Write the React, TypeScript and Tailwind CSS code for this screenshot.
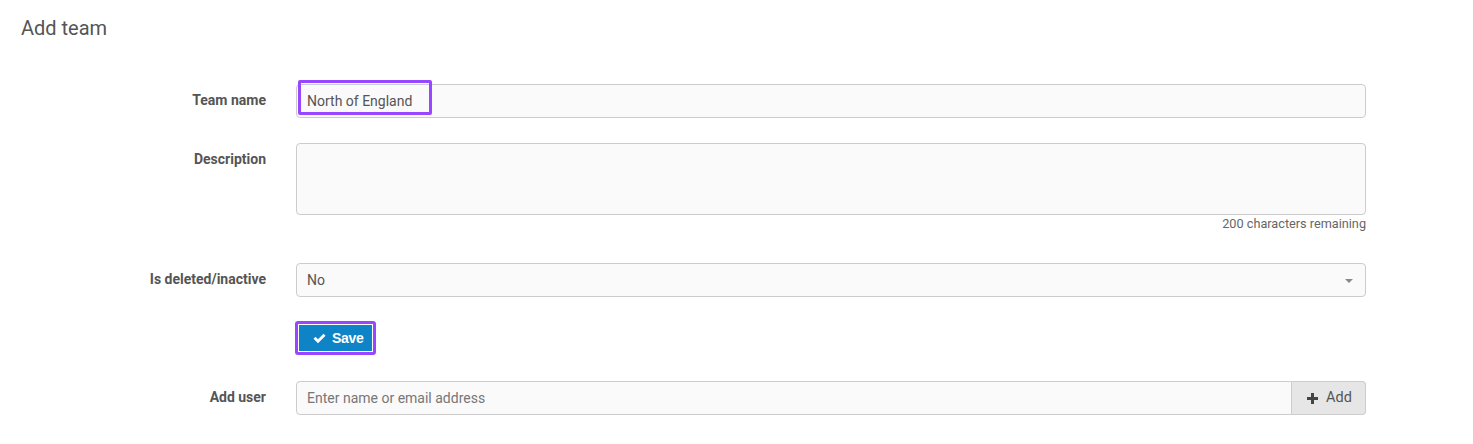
import React from 'react';

const font = { fontFamily: 'Roboto, "Liberation Sans", Arial, sans-serif' };

const Row: React.FC<{ label: string; className?: string; children: React.ReactNode }> = ({ label, className = '', children }) => (
  <div className={`flex ${className}`}>
    <label className="w-[266px] shrink-0 pt-[8px] text-right text-[14px] font-bold text-[#555] leading-[17px]">{label}</label>
    <div className="ml-[30px] w-[1070px]">{children}</div>
  </div>
);

export default function App() {
  return (
    <div className="min-h-screen bg-white text-[#555]" style={font}>
      <h1 className="pl-[21px] pt-[16px] text-[20px] leading-[24px] font-normal text-[#555]">Add team</h1>

      <div className="mt-[44px]">
        <Row label="Team name">
          <div className="relative">
            <input
              className="h-[34px] w-full rounded-[4px] border border-[#ccc] bg-[#fafafa] px-[10px] text-[14px] text-[#555] outline-none"
              defaultValue="North of England"
            />
            <div className="pointer-events-none absolute left-[2px] top-[-4px] h-[35px] w-[134px] rounded-[2px] border-[3px] border-[#9747ff]" />
          </div>
        </Row>

        <Row label="Description" className="mt-[25px]">
          <textarea className="block h-[72px] w-full resize-none rounded-[4px] border border-[#ccc] bg-[#fafafa] px-[10px] py-[6px] text-[14px] outline-none" />
          <div className="mt-[2px] text-right text-[12.7px] leading-[14px] text-[#666]">200 characters remaining</div>
        </Row>

        <Row label="Is deleted/inactive" className="mt-[32px]">
          <div className="relative flex h-[34px] w-full items-center rounded-[4px] border border-[#ccc] bg-[#fafafa] px-[10px] text-[14px] text-[#555]">
            No
            <span className="absolute right-[12px] top-[15px] h-0 w-0 border-x-[4px] border-t-[4px] border-x-transparent border-t-[#888]" />
          </div>
        </Row>

        <div className="mt-[24px] pl-[295px]">
          <div className="inline-flex rounded-[3px] border-[3px] border-[#9747ff] p-[1px]">
            <button
              className="flex h-[26px] items-center gap-[6px] bg-[#0e84c7] pl-[14px] pr-[8px] text-[14px] font-bold text-white"
              style={{ fontFamily: '"Liberation Sans", Arial, sans-serif' }}
            >
              <svg width="13" height="11" viewBox="0 0 13 11" fill="white">
                <path d="M0.5 5.8 L2.5 3.8 L5 6.3 L10.5 0.8 L12.5 2.8 L5 10.3 Z" />
              </svg>
              <span className="tracking-[-0.3px]">Save</span>
            </button>
          </div>
        </div>

        <Row label="Add user" className="mt-[26px]">
          <div className="flex h-[34px] w-full">
            <input
              className="h-full flex-1 rounded-l-[4px] border border-[#ccc] bg-[#fafafa] px-[10px] text-[14px] text-[#555] outline-none placeholder:text-[#777]"
              placeholder="Enter name or email address"
            />
            <button className="flex h-full w-[74px] items-center justify-center gap-[8px] rounded-r-[4px] border border-l-0 border-[#ccc] bg-[#e6e6e6] pl-[2px] text-[14.5px] text-[#555]">
              <svg width="11" height="11" viewBox="0 0 11 11" fill="#444">
                <path d="M4 0 H7 V4 H11 V7 H7 V11 H4 V7 H0 V4 H4 Z" />
              </svg>
              Add
            </button>
          </div>
        </Row>
      </div>
    </div>
  );
}
